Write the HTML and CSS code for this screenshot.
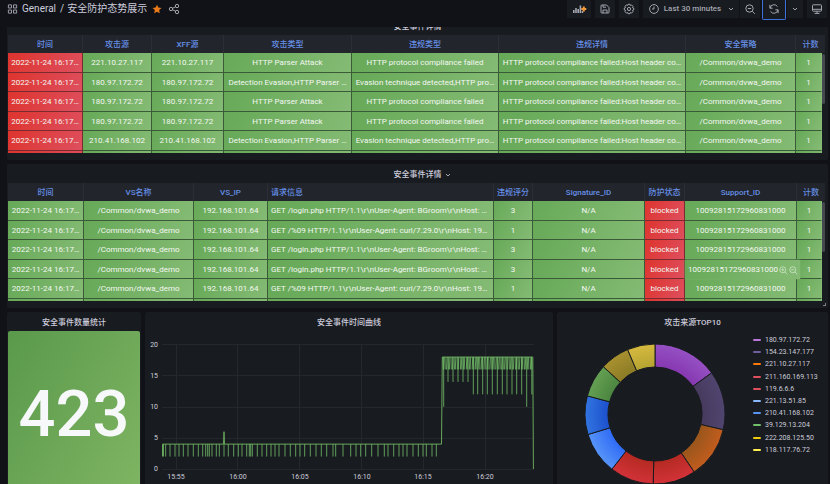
FILE: index.html
```html
<!DOCTYPE html>
<html lang="zh-CN">
<head>
<meta charset="utf-8">
<meta name="viewport" content="width=device-width, initial-scale=1">
<title>General / 安全防护态势展示</title>
<link rel="stylesheet" href="styles.css">
</head>
<body>
<header class="toolbar">
  <svg class="icon apps" viewBox="0 0 12 12"><path d="M1.5 1.5h3.4v3.4H1.5zM7.1 1.5h3.4v3.4H7.1zM1.5 7.1h3.4v3.4H1.5zM7.1 7.1h3.4v3.4H7.1z"/></svg>
  <h1 class="crumbs"><a href="#">General</a><span>/</span><a href="#">安全防护态势展示</a></h1>
  <button class="plain star" aria-label="Star"><svg class="icon" viewBox="0 0 12 12"><path d="M6 .8l1.6 3.4 3.8.5-2.8 2.6.7 3.8L6 9.3l-3.3 1.8.7-3.8L.6 4.700l3.800-.5z"/></svg></button>
  <button class="plain" aria-label="Share"><svg class="icon" viewBox="0 0 12 12"><circle cx="3" cy="6" r="1.7"/><circle cx="9" cy="3" r="1.7"/><circle cx="9" cy="9" r="1.700"/><path d="M4.500 5.300l3-1.500M4.500 6.700l3 1.500"/></svg></button>
  <div class="actions">
    <button class="btn wide" aria-label="Add panel"><svg class="icon add" viewBox="0 0 15 12"><path class="bars" d="M1 7h1.600v3H1zM3.200 5h1.600v5H3.200zM5.400 6h1.600v4H5.400zM7.600 2.500h1.600V10H7.600zM9.800 8h1.400v2H9.800z"/><path class="plus" d="M11.800 3.400v5M9.300 5.900h5"/></svg></button>
    <button class="btn" aria-label="Save"><svg class="icon" viewBox="0 0 12 12"><path d="M2 2.800q0-.8.8-.8h4.700L10 4.500v4.700q0 .8-.8.8H2.800q-.8 0-.8-.8zM4 2v2.200h3M4 10V7h4v3"/></svg></button>
    <button class="btn" aria-label="Settings"><svg class="icon" viewBox="0 0 12 12"><path d="M5 1.300h2l.3 1.200 1.200-.6 1.500 1.500-.6 1.200 1.300.4v2l-1.300.4.6 1.200-1.500 1.500-1.200-.6-.3 1.200H5l-.4-1.200-1.200.6-1.400-1.500.6-1.200L1.300 7V5l1.300-.4L2 3.400l1.400-1.500 1.200.6z"/><circle cx="6" cy="6" r="1.600"/></svg></button>
    <div class="group time">
      <button class="btn range"><svg class="icon" viewBox="0 0 12 12"><circle cx="6" cy="6" r="4.400"/><path d="M6 3.500V6H4"/></svg><span>Last 30 minutes</span><svg class="chevron" viewBox="0 0 6 6"><path d="M1 2l2 2 2-2"/></svg></button>
      <button class="btn" aria-label="Zoom out"><svg class="icon" viewBox="0 0 12 12"><circle cx="5.500" cy="5.500" r="3.700"/><path d="M8.300 8.300l2.500 2.500M3.800 5.500h3.400"/></svg></button>
    </div>
    <div class="group">
      <button class="btn refresh" aria-label="Refresh"><svg class="icon" viewBox="0 0 12 12"><path d="M2 5.200A4.100 4.100 0 0 1 9.500 3.600M10 6.800A4.100 4.100 0 0 1 2.500 8.400M1.900 1.800v3.400h2.800M10.100 10.200V6.800H7.300"/></svg></button>
      <button class="btn narrow" aria-label="Refresh interval"><svg class="chevron" viewBox="0 0 6 6"><path d="M1 2l2 2 2-2"/></svg></button>
    </div>
    <button class="btn" aria-label="View mode"><svg class="icon" viewBox="0 0 12 12"><path d="M1.500 2.500q0-.7.7-.7h7.600q.7 0 .7.7v5q0 .7-.7.7H2.200q-.7 0-.7-.7zM1.500 6.300h9M6 8.200v2M3.500 10.400h5"/></svg></button>
  </div>
</header>

<main class="dashboard">
  <section class="panel scrolled">
    <h2>安全事件详情</h2>
    <div class="scroller">
      <table class="events">
        <colgroup><col class="w75"><col class="w69"><col class="w72"><col class="w128"><col class="w147"><col class="w187"><col class="w110"><col class="w26"></colgroup>
        <thead><tr><th>时间</th><th>攻击源</th><th>XFF源</th><th>攻击类型</th><th>违规类型</th><th>违规详情</th><th>安全策略</th><th>计数</th></tr></thead>
        <tbody>
          <tr><td class="red">2022-11-24 16:17…</td><td>221.10.27.117</td><td>221.10.27.117</td><td>HTTP Parser Attack</td><td>HTTP protocol compliance failed</td><td>HTTP protocol compliance failed:Host header co…</td><td>/Common/dvwa_demo</td><td>1</td></tr>
          <tr><td class="red">2022-11-24 16:17…</td><td>180.97.172.72</td><td>180.97.172.72</td><td>Detection Evasion,HTTP Parser …</td><td>Evasion technique detected,HTTP pro…</td><td>HTTP protocol compliance failed:Host header co…</td><td>/Common/dvwa_demo</td><td>1</td></tr>
          <tr><td class="red">2022-11-24 16:17…</td><td>180.97.172.72</td><td>180.97.172.72</td><td>HTTP Parser Attack</td><td>HTTP protocol compliance failed</td><td>HTTP protocol compliance failed:Host header co…</td><td>/Common/dvwa_demo</td><td>1</td></tr>
          <tr><td class="red">2022-11-24 16:17…</td><td>180.97.172.72</td><td>180.97.172.72</td><td>HTTP Parser Attack</td><td>HTTP protocol compliance failed</td><td>HTTP protocol compliance failed:Host header co…</td><td>/Common/dvwa_demo</td><td>1</td></tr>
          <tr><td class="red">2022-11-24 16:17…</td><td>210.41.168.102</td><td>210.41.168.102</td><td>Detection Evasion,HTTP Parser …</td><td>Evasion technique detected,HTTP pro…</td><td>HTTP protocol compliance failed:Host header co…</td><td>/Common/dvwa_demo</td><td>1</td></tr>
          <tr><td class="red">&nbsp;</td><td></td><td></td><td></td><td></td><td></td><td></td><td></td></tr>
        </tbody>
      </table>
      <span class="thumb"></span>
    </div>
  </section>

  <section class="panel">
    <h2 class="menu">安全事件详情<svg class="chevron" viewBox="0 0 6 6"><path d="M1 2l2 2 2-2"/></svg></h2>
    <div class="scroller">
      <table class="events">
        <colgroup><col class="w76"><col class="w110"><col class="w74"><col class="w226"><col class="w39"><col class="w112"><col class="w40"><col class="w112"><col class="w25"></colgroup>
        <thead><tr><th>时间</th><th>VS名称</th><th>VS_IP</th><th class="left">请求信息</th><th>违规评分</th><th>Signature_ID</th><th>防护状态</th><th>Support_ID</th><th>计数</th></tr></thead>
        <tbody>
          <tr><td>2022-11-24 16:17…</td><td>/Common/dvwa_demo</td><td>192.168.101.64</td><td class="left">GET /login.php HTTP/1.1\r\nUser-Agent: BGroom\r\nHost: …</td><td>3</td><td>N/A</td><td class="red">blocked</td><td>10092815172960831000</td><td>1</td></tr>
          <tr><td>2022-11-24 16:17…</td><td>/Common/dvwa_demo</td><td>192.168.101.64</td><td class="left">GET /%09 HTTP/1.1\r\nUser-Agent: curl/7.29.0\r\nHost: 19…</td><td>1</td><td>N/A</td><td class="red">blocked</td><td>10092815172960831000</td><td>1</td></tr>
          <tr><td>2022-11-24 16:17…</td><td>/Common/dvwa_demo</td><td>192.168.101.64</td><td class="left">GET /login.php HTTP/1.1\r\nUser-Agent: BGroom\r\nHost: …</td><td>3</td><td>N/A</td><td class="red">blocked</td><td>10092815172960831000</td><td>1</td></tr>
          <tr><td>2022-11-24 16:17…</td><td>/Common/dvwa_demo</td><td>192.168.101.64</td><td class="left">GET /login.php HTTP/1.1\r\nUser-Agent: BGroom\r\nHost: …</td><td>3</td><td>N/A</td><td class="red">blocked</td><td class="hovered"><div class="hover">10092815172960831000<svg class="lens" viewBox="0 0 12 12"><circle cx="5" cy="5" r="4"/><path d="M8 8l3 3M3 5h4M5 3v4"/></svg><svg class="lens" viewBox="0 0 12 12"><circle cx="5" cy="5" r="4"/><path d="M8 8l3 3M3 5h4"/></svg></div></td><td>1</td></tr>
          <tr><td>2022-11-24 16:17…</td><td>/Common/dvwa_demo</td><td>192.168.101.64</td><td class="left">GET /%09 HTTP/1.1\r\nUser-Agent: curl/7.29.0\r\nHost: 19…</td><td>1</td><td>N/A</td><td class="red">blocked</td><td>10092815172960831000</td><td>1</td></tr>
          <tr><td>&nbsp;</td><td></td><td></td><td></td><td></td><td></td><td class="red"></td><td></td><td></td></tr>
        </tbody>
      </table>
      <span class="thumb"></span>
    </div>
    <span class="resize"></span>
  </section>

  <div class="row">
    <section class="panel">
      <h2>安全事件数量统计</h2>
      <div class="stat">423</div>
    </section>

    <section class="panel">
      <h2>安全事件时间曲线</h2>
      <svg class="chart" viewBox="146 331 406 153" role="img" aria-label="安全事件时间曲线">
        <path class="grid" d="M162 344.500H534M162 375.500H534M162 407.500H534M162 438.500H534M162 469.500H534M176.500 344V469M237.500 344V469M299.500 344V469M361.500 344V469M423.500 344V469M485.500 344V469"/>
        <g class="axis end"><text x="158" y="347">20</text><text x="158" y="378">15</text><text x="158" y="409">10</text><text x="158" y="440">5</text><text x="158" y="471">0</text></g>
        <g class="axis mid"><text x="176" y="479">15:55</text><text x="238" y="479">16:00</text><text x="300" y="479">16:05</text><text x="362" y="479">16:10</text><text x="423" y="479">16:15</text><text x="485" y="479">16:20</text></g>
        <path class="series" id="series"/>
        <path class="series dips" id="dips"/>
      </svg>
    </section>

    <section class="panel">
      <h2>攻击来源TOP10</h2>
      <div class="pie">
        <svg class="donut" viewBox="558 331 177 153" role="img" aria-label="攻击来源TOP10">
          <defs id="shades"></defs>
          <g id="ring"></g>
        </svg>
        <ul class="legend">
          <li class="c1">180.97.172.72</li>
          <li class="c2">154.23.147.177</li>
          <li class="c3">221.10.27.117</li>
          <li class="c4">211.160.169.113</li>
          <li class="c4">119.6.6.6</li>
          <li class="c6">221.13.51.85</li>
          <li class="c7">210.41.168.102</li>
          <li class="c8">39.129.13.204</li>
          <li class="c9">222.208.125.50</li>
          <li class="c10">118.117.76.72</li>
        </ul>
      </div>
    </section>
  </div>
</main>
<script src="charts.js"></script>
</body>
</html>
```
FILE: charts.js
```js
// Time series: the level is 4 with dips to 2, then 18 with dips of several depths.
const yOf = (v) => 469 - v * 6.22;
const low = [163.5, 165.7, 170, 175, 179, 183.3, 188, 193.3, 198.3, 202.7, 205.7, 207.7, 209.3, 212, 216.3, 219.3,
  224, 228.3, 233.7, 238.3, 242, 246.7, 249.3, 250.7, 252.3, 257.3, 262, 266.7, 271, 275, 279,
  285, 290.3, 295.7, 300, 304.7, 310.3, 316, 321.3, 326.7, 333, 335.7, 343, 350.7, 356, 360.7, 365.7,
  371.7, 378, 384.3, 388, 393.7, 399, 403, 407, 413, 418.3, 423, 426.3, 432, 436.3];
const high = [[443.7, 10], [448, 14], [453, 14], [458, 14], [463, 14], [468, 14], [473.3, 12], [477.7, 12],
  [482.7, 12], [487.3, 12], [492.3, 12], [497.3, 12], [502.3, 12], [507, 12], [512, 12], [516.7, 12],
  [521.7, 12], [526.7, 10], [531.8, 12]];

document.getElementById('series').setAttribute('d',
  `M162.500 ${yOf(2)}V${yOf(4)}H223.500L224 ${yOf(6)}L224.500 ${yOf(4)}H441.500L442.300 ${yOf(18)}H532.800L533.400 ${yOf(0)}`);

let d = low.map((x) => `M${x} ${yOf(4)}V${yOf(2)}`).join('');
d += high.map(([x, v]) => `M${x} ${yOf(18)}V${yOf(v)}`).join('');
for (let i = 0, x = 443; x < 532; i += 1, x += [1.2, 1.7, 1.3, 1.9][i % 4]) {
  d += `M${x} ${yOf(18)}L${x + 0.5} ${yOf(16)}`;
}
document.getElementById('dips').setAttribute('d', d);

// Donut: start angle of each slice in degrees, with its inner and outer shade.
const slices = [
  [0, '#8638b0', '#9650c4'], [54, '#473a5e', '#50456f'], [103, '#98561c', '#c25c1e'],
  [146, '#b52a22', '#d23238'], [181.5, '#b52a22', '#d23238'], [218, '#2f6bf5', '#5794f8'],
  [253, '#1c50cc', '#3274e0'], [285, '#4b8540', '#64a052'], [312.5, '#8c7c26', '#a8902f'],
  [337, '#b5a431', '#d6b93f']];
const at = (deg, r) => {
  const a = (deg * Math.PI) / 180;
  return `${(655 + r * Math.sin(a)).toFixed(2)} ${(414 - r * Math.cos(a)).toFixed(2)}`;
};
let shades = '';
let ring = '';
slices.forEach(([a, inner, outer], i) => {
  const b = i + 1 < slices.length ? slices[i + 1][0] : 360;
  shades += `<radialGradient id="s${i}" gradientUnits="userSpaceOnUse" cx="655" cy="414" r="70"><stop offset=".67" stop-color="${inner}"/><stop offset="1" stop-color="${outer}"/></radialGradient>`;
  ring += `<path fill="url(#s${i})" d="M${at(a, 70)}A70 70 0 0 1 ${at(b, 70)}L${at(b, 47)}A47 47 0 0 0 ${at(a, 47)}Z"/>`;
});
document.getElementById('shades').innerHTML = shades;
document.getElementById('ring').innerHTML = ring;
```
FILE: styles.css
```css
* { box-sizing: border-box; }

body {
  margin: 0;
  height: 100vh;
  overflow: hidden;
  display: flex;
  flex-direction: column;
  background: #111217;
  color: #ccccdc;
  font-family: Roboto, "Noto Sans CJK SC", sans-serif;
  font-size: 8px;
  line-height: 12px;
}

a { color: inherit; text-decoration: none; }
svg { display: block; }

/* Toolbar */
.toolbar {
  flex: none;
  display: flex;
  align-items: flex-start;
  gap: 4px;
  height: 27px;
  padding: 0 3px 0 7px;
}
.icon {
  width: 12px;
  height: 12px;
  fill: none;
  stroke: #a4a6b0;
  stroke-width: 1;
}
.apps { width: 11px; margin-top: 3px; }
.crumbs {
  display: flex;
  gap: 3px;
  margin: 0;
  font-size: 10px;
  line-height: 18px;
  font-weight: 400;
}
.crumbs span { margin-left: 1px; }
.plain {
  height: 18px;
  padding: 0 1px;
  border: 0;
  background: none;
}
.star .icon { width: 10px; fill: #eb7b18; stroke: none; }
.actions { display: flex; gap: 4px; margin-left: auto; }
.group { display: flex; gap: 1px; }
.time { margin-right: -2px; }
.btn {
  display: flex;
  align-items: center;
  justify-content: center;
  width: 20px;
  height: 18px;
  padding: 0;
  border: 0;
  border-radius: 1px;
  background: #181b1f;
  color: #a4a6b0;
  font: 500 8px/12px Roboto, sans-serif;
}
.wide { width: 24px; }
.wide .icon { width: 15px; }
.narrow { width: 16px; }
.range { width: 96px; gap: 4px; }
.range .chevron { margin-left: 3px; }
.bars { fill: #a4a6b0; stroke: none; }
.plus { stroke: #f59a3a; stroke-width: 2; }
.refresh {
  width: 24px;
  height: 20px;
  padding-bottom: 1px;
  border: 1px solid #3d71d9;
  border-top: 0;
  border-radius: 0 0 2px 2px;
}
.chevron {
  width: 6px;
  height: 6px;
  fill: none;
  stroke: #a4a6b0;
  stroke-width: 1;
}

/* Panels */
.dashboard {
  flex: 1;
  min-height: 0;
  overflow: hidden;
  display: flex;
  flex-direction: column;
  gap: 4px;
  padding: 0 2px 0 7px;
}
.panel {
  position: relative;
  flex: none;
  min-width: 0;
  padding: 0 1px 7px;
  border-radius: 2px;
  background: #181b1f;
}
.panel.scrolled { margin-top: -11px; }
.panel h2 {
  display: flex;
  align-items: center;
  justify-content: center;
  gap: 3px;
  height: 19px;
  margin: 0;
  padding-top: 2px;
  font-size: 8px;
  line-height: 12px;
  font-weight: 500;
}
.panel .menu { padding-left: 9px; }
.resize {
  position: absolute;
  right: 2px;
  bottom: 2px;
  width: 3px;
  height: 3px;
  border-right: 1px solid #7b7d85;
  border-bottom: 1px solid #7b7d85;
}

/* Tables */
.scroller {
  position: relative;
  height: 118px;
  overflow: hidden;
  padding-right: 5px;
}
.thumb {
  position: absolute;
  top: 19px;
  right: 2px;
  width: 3px;
  height: 50px;
  border-radius: 2px;
  background: #46484f;
}
.events {
  width: 100%;
  height: 135px;
  table-layout: fixed;
  border-collapse: separate;
  border-spacing: 0;
}
.events th,
.events td {
  padding: 2px 3px 0;
  overflow: hidden;
  white-space: nowrap;
  text-align: center;
  vertical-align: middle;
}
.events th {
  height: 18px;
  border-right: 1px solid #2b2e34;
  background: #22252b;
  color: #668fe6;
  font-weight: 500;
}
.events th:last-child {
  padding: 2px 0 0 3px;
  border-right: 0;
  box-shadow: 3px 0 #22252b;
}
.events td {
  border-right: 1px solid #3b5a38;
  border-bottom: 1px solid #3b5a38;
  background: linear-gradient(120deg, #66a957, #85bb75);
  color: #f4f8f2;
}
.events td:last-child { border-right-color: #85bb75; }
.events td.red {
  border-color: #7a2b30;
  background: linear-gradient(120deg, #de342e, #de4f5e);
}
.events .left { text-align: left; }
.events td.hovered { position: relative; overflow: visible; }
.hover {
  position: absolute;
  z-index: 1;
  top: 0;
  left: 0;
  display: flex;
  align-items: center;
  gap: 1px;
  width: 115px;
  height: 19px;
  padding: 2px 0 0 3px;
  background: linear-gradient(120deg, #66a957, #85bb75);
  box-shadow: 0 0 2px #7fb573;
}
.lens {
  width: 9px;
  height: 9px;
  fill: none;
  stroke: #d3e8cd;
  stroke-width: 1;
}
.w25 { width: 25px; }
.w26 { width: 26px; }
.w39 { width: 39px; }
.w40 { width: 40px; }
.w69 { width: 69px; }
.w72 { width: 72px; }
.w74 { width: 74px; }
.w75 { width: 75px; }
.w76 { width: 76px; }
.w110 { width: 110px; }
.w112 { width: 112px; }
.w128 { width: 128px; }
.w147 { width: 147px; }
.w187 { width: 187px; }
.w226 { width: 226px; }

/* Bottom row */
.row {
  flex: none;
  display: grid;
  grid-template-columns: 134fr 408fr 271fr;
  gap: 4px;
}
.stat {
  display: flex;
  align-items: center;
  justify-content: center;
  height: 166px;
  border-radius: 2px;
  background: linear-gradient(120deg, #5a994b, #7fb563);
  color: #f7f8fa;
  font-size: 65px;
  line-height: 66px;
  font-weight: 500;
}
.chart { width: 100%; height: auto; }
.grid { fill: none; stroke: #24272b; stroke-width: 1; }
.axis { fill: #ccccdc; font-size: 7px; }
.end { text-anchor: end; }
.mid { text-anchor: middle; }
.series { fill: none; stroke: #69a65c; stroke-width: 1; }
.dips { stroke: #73bf69; stroke-opacity: .8; }
.pie { display: flex; align-items: flex-start; }
.donut { flex: 1; min-width: 0; }
.donut path { stroke: #181b1f; stroke-width: 1; }
.legend {
  flex: none;
  display: grid;
  grid-auto-rows: 1fr;
  width: 92px;
  height: 122px;
  margin: 3px 0 0;
  padding: 0 0 0 18px;
  list-style: none;
  font-size: 7px;
}
.legend li { display: flex; align-items: center; gap: 4px; }
.legend li::before {
  content: "";
  width: 8px;
  height: 2px;
  border-radius: 1px;
  background: currentColor;
}
.legend .c1::before { background: #b877d9; }
.legend .c2::before { background: #705da0; }
.legend .c3::before { background: #ff780a; }
.legend .c4::before { background: #e0505c; }
.legend .c6::before { background: #8ab8ff; }
.legend .c7::before { background: #5794f2; }
.legend .c8::before { background: #73bf69; }
.legend .c9::before { background: #f2cc0c; }
.legend .c10::before { background: #ffee52; }
```
